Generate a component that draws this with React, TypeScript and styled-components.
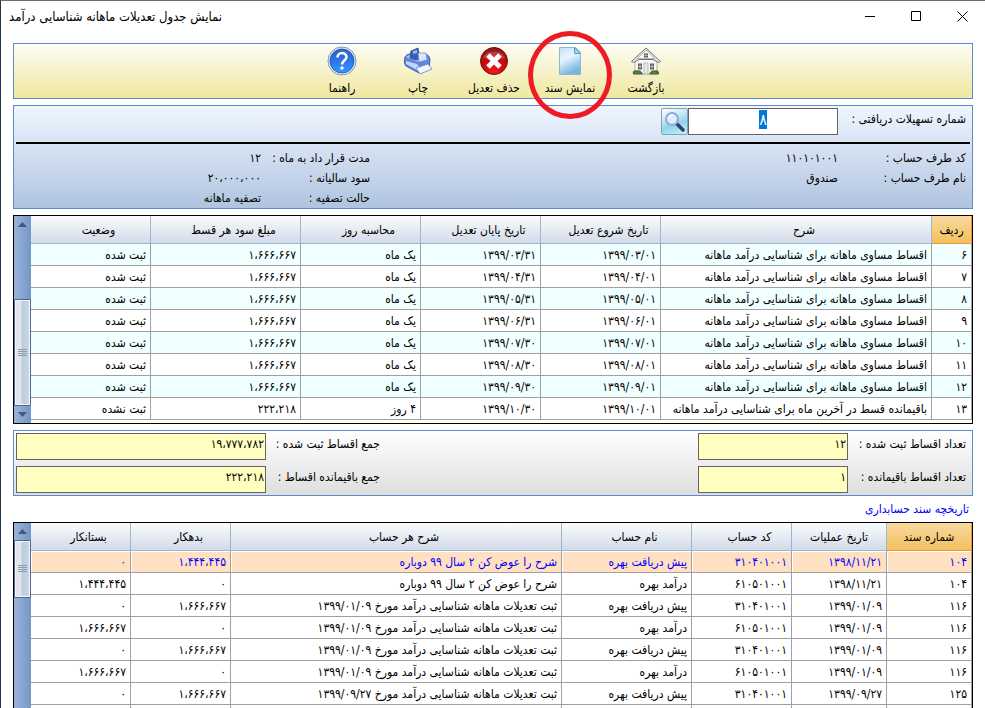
import React from 'react';
import styled, { createGlobalStyle, css } from 'styled-components';

const GlobalStyle = createGlobalStyle`
  *, *::before, *::after { box-sizing: border-box; }
  body { margin: 0; background: #fff; }
  body, button, input { font-family: "DejaVu Sans Condensed", "DejaVu Sans", sans-serif; font-size: 12px; color: #000; }
`;

const Window = styled.div`
  height: 100vh;
  overflow: hidden;
  display: flex;
  flex-direction: column;
  border-top: 1px solid #6e6e6e;
  border-left: 1px solid #22384a;
  background: #fff;
`;

const TitleBar = styled.header`
  flex: none;
  height: 30px;
  display: flex;
  justify-content: space-between;
  align-items: center;
  padding-left: 8px;
`;

const Title = styled.h1`
  margin: 0;
  font-size: 13px;
  font-weight: 400;
`;

const WindowButtons = styled.div`
  display: flex;
`;

const WindowButton = styled.button`
  width: 46px;
  height: 30px;
  padding: 0;
  border: 0;
  background: none;
  display: grid;
  place-items: center;
`;

const Content = styled.main`
  direction: rtl;
  flex: none;
  display: flex;
  flex-direction: column;
  padding: 12px 12px 0;
`;

const Panel = styled.section`
  border: 1px solid #5b8bcd;
`;

const Toolbar = styled(Panel)`
  position: relative;
  z-index: 1;
  height: 56px;
  display: flex;
  justify-content: center;
  padding-left: 2px;
  background: linear-gradient(#fefdf5, #efe7a0);
  margin-bottom: 6px;
`;

const ToolButton = styled.button`
  position: relative;
  width: 76px;
  padding: 2px 0 0;
  border: 0;
  background: none;
  display: flex;
  flex-direction: column;
  align-items: center;
  gap: 2px;
  line-height: 16px;
`;

const Highlight = styled.span`
  position: absolute;
  top: -13px;
  left: 50%;
  width: 84px;
  height: 88px;
  margin-left: -42px;
  border: 5px solid #ed1c24;
  border-radius: 50%;
  pointer-events: none;
`;

const InfoPanel = styled(Panel)`
  padding: 2px 2px 0;
  background: linear-gradient(#eff6ff, #b0c4df);
  margin-bottom: 6px;
`;

const SearchRow = styled.div`
  display: flex;
  align-items: flex-start;
  height: 36px;
  padding-right: 4px;
  border-bottom: 2px solid #000;
`;

const SearchLabel = styled.label`
  width: 128px;
  line-height: 22px;
`;

const SearchInput = styled.input`
  width: 150px;
  height: 27px;
  padding: 0 0 4px;
  font-size: 16px;
  border: 1px solid #646464;
  border-radius: 0;
  background: #fff;
  text-align: center;
  outline: 0;
  &::selection { background: #0078d7; color: #fff; }
`;

const SearchButton = styled.button`
  width: 27px;
  height: 27px;
  padding: 0;
  border: 1px solid #7fa3b8;
  border-radius: 2px;
  background: linear-gradient(160deg, #ffffff 0%, #c6e9f4 35%, #8fd6ea 60%, #c8f0f6 100%);
  display: grid;
  place-items: center;
`;

const Details = styled.dl`
  margin: 0;
  padding: 4px 4px 0 0;
  display: grid;
  grid-template-columns: 128px 1fr 109px 245px;
  grid-auto-rows: 20px;
  line-height: 20px;
`;

const Term = styled.dt<{ $column: number }>`
  grid-column: ${(p) => p.$column};
`;

const Value = styled.dd`
  margin: 0;
`;

const GridFrame = styled.section`
  display: grid;
  grid-template-columns: 1fr 17px;
  border: 1px solid #000;
  background: #fffff0;
`;

const Table = styled.table`
  width: 100%;
  align-self: start;
  margin-bottom: 3px;
  table-layout: fixed;
  border-collapse: separate;
  border-spacing: 0;
`;

const Col = styled.col<{ $width?: number }>`
  ${(p) => p.$width && `width: ${p.$width}px;`}
`;

const HeadCell = styled.th<{ $sorted?: boolean; $shifted?: boolean }>`
  height: 28px;
  padding: 0 0 0 ${(p) => (p.$shifted ? 16 : 0)}px;
  font-weight: 400;
  white-space: nowrap;
  border-left: 1px solid #9eb6ce;
  border-bottom: 1px solid #9eb6ce;
  background: linear-gradient(#fafcfd, #d3dbe9);
  &:last-child { border-left: 0; }
  ${(p) => p.$sorted && css`
    border-right: 1px solid #f29536;
    border-bottom-color: #f29536;
    background: linear-gradient(#f9d99f, #f1c15f);
  `}
`;

const Cell = styled.td`
  height: 22px;
  padding: 1px 4px 0 0;
  line-height: 20px;
  text-align: right;
  white-space: nowrap;
  border-left: 1px solid #a0a0a0;
  border-bottom: 1px solid #a0a0a0;
  &:first-child { border-right: 1px solid #a0a0a0; }
  &:last-child { border-left: 0; }
`;

const Row = styled.tr<{ $tone: 'plain' | 'tinted' | 'selected' }>`
  background: ${(p) => ({ plain: '#fff', tinted: '#f0ffff', selected: '#ffe0c0' })[p.$tone]};
  ${(p) => p.$tone === 'selected' && css`
    color: #0000ff;
    ${Cell} { box-shadow: inset 1px 1px 0 #fff; }
  `}
`;

const ScrollBar = styled.div`
  display: flex;
  flex-direction: column;
  background: linear-gradient(90deg, #97b4dc, #7596c6);
`;

const ScrollArrow = styled.button`
  flex: none;
  height: 17px;
  padding: 0;
  border: 0;
  background: none;
  display: grid;
  place-items: center;
`;

const Track = styled.div<{ $atEnd?: boolean }>`
  flex: 1;
  display: flex;
  flex-direction: column;
  justify-content: ${(p) => (p.$atEnd ? 'flex-end' : 'flex-start')};
`;

const Thumb = styled.div<{ $size: number }>`
  height: ${(p) => p.$size}px;
  border: 1px solid #56658f;
  border-radius: 1px;
  box-shadow: inset 0 0 0 1px #f3f6fb;
  background: linear-gradient(90deg, #e2e5ec 0 6px, #bccbdd 7px, #cbd7e6 100%);
  display: grid;
  place-items: center;
`;

const Summary = styled(Panel)`
  margin-top: 6px;
  padding: 2px 6px 2px 2px;
  display: grid;
  grid-template-columns: 118px 150px 1fr 114px 250px;
  row-gap: 6px;
  background: linear-gradient(#fff, #dedede);
`;

const SummaryLabel = styled.label<{ $column: number }>`
  grid-column: ${(p) => p.$column};
  line-height: 22px;
`;

const SummaryField = styled.input`
  min-width: 0;
  width: 100%;
  height: 27px;
  padding: 0 1px 6px;
  border: 1px solid #646464;
  border-radius: 0;
  background: #ffffc0;
  outline: 0;
`;

const HistoryTitle = styled.h2`
  margin: 0;
  padding: 2px 4px 0 0;
  height: 26px;
  line-height: 22px;
  font-size: 12px;
  font-weight: 400;
  color: #0000ff;
`;

const HomeIcon = () => (
  <svg width="32" height="32" viewBox="0 0 32 32">
    <path d="M5 14 16 4l11 10v14H5z" fill="#f7f7f5" stroke="#a5a5a5" strokeWidth=".8" />
    <path d="M16 2 1.500 15.500l2 1L9 13.500h14l5.500 3 2-1z" fill="#e4e4e4" stroke="#666" strokeWidth=".9" />
    <path d="M16 4 7.500 12.500h17z" fill="#fbfbf9" stroke="#999" strokeWidth=".7" />
    <path d="M14 7.500h4v4h-4z" fill="#555" />
    <path d="M16 7.500v4M14 9.500h4" stroke="#ddd" strokeWidth=".6" />
    <path d="M8 17.500h4v6H8zM20 17.500h4v6h-4z" fill="#555" />
    <path d="M10 17.500v6M8 20.500h4M22 17.500v6M20 20.500h4" stroke="#ddd" strokeWidth=".7" />
    <path d="M14 17h4v11h-4z" fill="#e8e8e6" stroke="#aaa" strokeWidth=".7" />
    <path d="M3 28.500c-1-3 1-5 4-4 3-1 5 1 6 4zM19 28.500c1-3 3-5 6-4 2-1 5 1 4 4z" fill="#4f7038" />
    <path d="M5 26.500h3M23 26.500h3" stroke="#8a6a4c" />
  </svg>
);

const DocumentIcon = () => (
  <svg width="32" height="32" viewBox="0 0 32 32">
    <defs>
      <linearGradient id="sheet" x1="0" y1="0" x2=".4" y2="1">
        <stop offset="0" stopColor="#c3e0f5" />
        <stop offset=".45" stopColor="#e6f6ff" />
        <stop offset="1" stopColor="#79b5df" />
      </linearGradient>
    </defs>
    <path d="M5.500 1.500h16l5 5v22h-21z" fill="url(#sheet)" stroke="#8fb9d2" />
    <path d="M20.500 1.500v6h6z" fill="#a5d3ec" stroke="#5f9dc4" strokeLinejoin="round" />
  </svg>
);

const DeleteIcon = () => (
  <svg width="32" height="32" viewBox="0 0 32 32">
    <defs>
      <radialGradient id="red" cx=".5" cy=".9" r=".9">
        <stop offset="0" stopColor="#f01818" />
        <stop offset=".6" stopColor="#c40a0a" />
        <stop offset="1" stopColor="#8c1a1a" />
      </radialGradient>
    </defs>
    <circle cx="16" cy="15" r="13.500" fill="url(#red)" stroke="#6e1414" />
    <path d="M5 11.500a12 10 0 0 1 22 0c-7 4-15 4-22 0z" fill="#fff" opacity=".18" />
    <path d="m10 9 12 12m0-12-12 12" stroke="#fff" strokeWidth="5" />
  </svg>
);

const PrinterIcon = () => (
  <svg width="32" height="32" viewBox="0 0 32 32">
    <path d="M3 11c1-2 3-3 5-3l14 0c4 0 6 3 6 6l-1 8-10 5L4 20c-2-2-2-6-1-9z" fill="#5f86dc" stroke="#3c5fb8" />
    <path d="M4 11c2-2 4-2 6-2h12l4 4-10 3z" fill="#a9c4f5" />
    <path d="m8 12 1-7 7-3 2 11-4 1z" fill="#3a5fb4" stroke="#28479a" strokeWidth=".8" />
    <path d="m11 5 4-1v3l-4 1z" fill="#9db9ec" />
    <path d="m16 7 8 0 1 7-8 2z" fill="#dbe8fc" stroke="#6c8acb" strokeWidth=".8" />
    <path d="m4 15 11 3 2 3-2 3L4 18z" fill="#c2d6fa" />
    <path d="m14 22 12-4 4 5-12 5z" fill="#f2f7ff" stroke="#7490c5" strokeWidth=".9" />
  </svg>
);

const HelpIcon = () => (
  <svg width="32" height="32" viewBox="0 0 32 32">
    <defs>
      <linearGradient id="blue" x1="0" y1="0" x2="0" y2="1">
        <stop offset="0" stopColor="#2b64c9" />
        <stop offset=".5" stopColor="#2e74e8" />
        <stop offset="1" stopColor="#2f9bff" />
      </linearGradient>
    </defs>
    <circle cx="16" cy="15" r="14" fill="#dce8f7" stroke="#8298b5" />
    <circle cx="16" cy="15" r="12" fill="url(#blue)" stroke="#1d4fb0" strokeWidth=".8" />
    <path d="M11.500 11.500c0-6 9-6 9-.5 0 3.500-4.500 3.500-4.500 7.500" fill="none" stroke="#fff" strokeWidth="2.600" />
    <circle cx="16" cy="22" r="1.700" fill="#fff" />
  </svg>
);

const MagnifierIcon = () => (
  <svg width="21" height="21" viewBox="0 0 21 21">
    <path d="m12 12 7 7" stroke="#3b3a78" strokeWidth="3.500" strokeLinecap="round" />
    <circle cx="8" cy="8" r="6" fill="#dceeff" stroke="#8fa8d4" strokeWidth="2" />
    <path d="M5 7a4 4 0 0 1 4-3" fill="none" stroke="#fff" strokeWidth="1.500" />
  </svg>
);

const Arrow = ({ down }: { down?: boolean }) => (
  <svg width="9" height="5" viewBox="0 0 9 5">
    <path d={down ? 'M0 0h9L4.500 5z' : 'M0 5h9L4.500 0z'} fill="#44577f" />
  </svg>
);

const Grip = () => (
  <svg width="9" height="8" viewBox="0 0 9 8">
    <path d="M0 .5h9M0 2.500h9M0 4.500h9M0 6.500h9" stroke="#8d9bb0" />
  </svg>
);

type Column = { title: string; width?: number; sorted?: boolean; shifted?: boolean };

const installmentColumns: Column[] = [
  { title: 'ردیف', width: 41, sorted: true },
  { title: 'شرح', shifted: true },
  { title: 'تاریخ شروع تعدیل', width: 120, shifted: true },
  { title: 'تاریخ پایان تعدیل', width: 120, shifted: true },
  { title: 'محاسبه روز', width: 120, shifted: true },
  { title: 'مبلغ سود هر قسط', width: 150, shifted: true },
  { title: 'وضعیت', width: 119, shifted: true },
];

const regular = 'اقساط مساوی ماهانه برای شناسایی درآمد ماهانه';
const installments = [
  ['۶', regular, '۱۳۹۹/۰۳/۰۱', '۱۳۹۹/۰۳/۳۱', 'یک ماه', '۱،۶۶۶،۶۶۷', 'ثبت شده'],
  ['۷', regular, '۱۳۹۹/۰۴/۰۱', '۱۳۹۹/۰۴/۳۱', 'یک ماه', '۱،۶۶۶،۶۶۷', 'ثبت شده'],
  ['۸', regular, '۱۳۹۹/۰۵/۰۱', '۱۳۹۹/۰۵/۳۱', 'یک ماه', '۱،۶۶۶،۶۶۷', 'ثبت شده'],
  ['۹', regular, '۱۳۹۹/۰۶/۰۱', '۱۳۹۹/۰۶/۳۱', 'یک ماه', '۱،۶۶۶،۶۶۷', 'ثبت شده'],
  ['۱۰', regular, '۱۳۹۹/۰۷/۰۱', '۱۳۹۹/۰۷/۳۰', 'یک ماه', '۱،۶۶۶،۶۶۷', 'ثبت شده'],
  ['۱۱', regular, '۱۳۹۹/۰۸/۰۱', '۱۳۹۹/۰۸/۳۰', 'یک ماه', '۱،۶۶۶،۶۶۷', 'ثبت شده'],
  ['۱۲', regular, '۱۳۹۹/۰۹/۰۱', '۱۳۹۹/۰۹/۳۰', 'یک ماه', '۱،۶۶۶،۶۶۷', 'ثبت شده'],
  ['۱۳', 'باقیمانده قسط در آخرین ماه برای شناسایی درآمد ماهانه', '۱۳۹۹/۱۰/۰۱', '۱۳۹۹/۱۰/۳۰', '۴ روز', '۲۲۲،۲۱۸', 'ثبت نشده'],
];

const voucherColumns: Column[] = [
  { title: 'شماره سند', width: 86, sorted: true },
  { title: 'تاریخ عملیات', width: 95 },
  { title: 'کد حساب', width: 100, shifted: true },
  { title: 'نام حساب', width: 130, shifted: true },
  { title: 'شرح هر حساب', shifted: true },
  { title: 'بدهکار', width: 100, shifted: true },
  { title: 'بستانکار', width: 99, shifted: true },
];

const changed = 'شرح را عوض کن ۲ سال ۹۹ دوباره';
const posted = 'ثبت تعدیلات ماهانه شناسایی درآمد مورخ ۱۳۹۹/۰۱/۰۹';
const vouchers = [
  ['۱۰۴', '۱۳۹۸/۱۱/۲۱', '۳۱۰۴۰۱۰۰۱', 'پیش دریافت بهره', changed, '۱،۴۴۴،۴۴۵', '۰'],
  ['۱۰۴', '۱۳۹۸/۱۱/۲۱', '۶۱۰۵۰۱۰۰۱', 'درآمد بهره', changed, '۰', '۱،۴۴۴،۴۴۵'],
  ['۱۱۶', '۱۳۹۹/۰۱/۰۹', '۳۱۰۴۰۱۰۰۱', 'پیش دریافت بهره', posted, '۱،۶۶۶،۶۶۷', '۰'],
  ['۱۱۶', '۱۳۹۹/۰۱/۰۹', '۶۱۰۵۰۱۰۰۱', 'درآمد بهره', posted, '۰', '۱،۶۶۶،۶۶۷'],
  ['۱۱۶', '۱۳۹۹/۰۱/۰۹', '۳۱۰۴۰۱۰۰۱', 'پیش دریافت بهره', posted, '۱،۶۶۶،۶۶۷', '۰'],
  ['۱۱۶', '۱۳۹۹/۰۱/۰۹', '۶۱۰۵۰۱۰۰۱', 'درآمد بهره', posted, '۰', '۱،۶۶۶،۶۶۷'],
  ['۱۲۵', '۱۳۹۹/۰۹/۲۷', '۳۱۰۴۰۱۰۰۱', 'پیش دریافت بهره', 'ثبت تعدیلات ماهانه شناسایی درآمد مورخ ۱۳۹۹/۰۹/۲۷', '۱،۶۶۶،۶۶۷', '۰'],
  ['', '', '', '', '', '', ''],
];

type DataGridProps = {
  columns: Column[];
  rows: string[][];
  tone: (index: number) => 'plain' | 'tinted' | 'selected';
  thumb: number;
  atEnd?: boolean;
};

const DataGrid = ({ columns, rows, tone, thumb, atEnd }: DataGridProps) => (
  <GridFrame>
    <Table>
      <colgroup>
        {columns.map((c) => <Col key={c.title} $width={c.width} />)}
      </colgroup>
      <thead>
        <tr>
          {columns.map((c) => (
            <HeadCell key={c.title} scope="col" $sorted={c.sorted} $shifted={c.shifted}>{c.title}</HeadCell>
          ))}
        </tr>
      </thead>
      <tbody>
        {rows.map((row, i) => (
          <Row key={i} $tone={tone(i)}>
            {row.map((text, j) => <Cell key={j}>{text}</Cell>)}
          </Row>
        ))}
      </tbody>
    </Table>
    <ScrollBar>
      <ScrollArrow type="button" aria-label="بالا"><Arrow /></ScrollArrow>
      <Track $atEnd={atEnd}><Thumb $size={thumb}><Grip /></Thumb></Track>
      <ScrollArrow type="button" aria-label="پایین"><Arrow down /></ScrollArrow>
    </ScrollBar>
  </GridFrame>
);

const tools = [
  { label: 'بازگشت', icon: <HomeIcon /> },
  { label: 'نمایش سند', icon: <DocumentIcon />, marked: true },
  { label: 'حذف تعدیل', icon: <DeleteIcon /> },
  { label: 'چاپ', icon: <PrinterIcon /> },
  { label: 'راهنما', icon: <HelpIcon /> },
];

export default function App() {
  const loanInput = React.useRef<HTMLInputElement>(null);

  React.useEffect(() => {
    loanInput.current?.focus();
    loanInput.current?.select();
  }, []);

  return (
    <>
      <GlobalStyle />
      <Window lang="fa">
        <TitleBar>
          <Title dir="rtl">نمایش جدول تعدیلات ماهانه شناسایی درآمد</Title>
          <WindowButtons>
            <WindowButton type="button" aria-label="کوچک کردن">
              <svg width="11" height="11" viewBox="0 0 11 11"><path d="M0 5.500h10" stroke="#000" /></svg>
            </WindowButton>
            <WindowButton type="button" aria-label="بزرگ کردن">
              <svg width="11" height="11" viewBox="0 0 11 11"><path d="M.5.500h9v9h-9z" fill="none" stroke="#000" /></svg>
            </WindowButton>
            <WindowButton type="button" aria-label="بستن">
              <svg width="11" height="11" viewBox="0 0 11 11"><path d="m.5.500 10 10m0-10-10 10" stroke="#000" /></svg>
            </WindowButton>
          </WindowButtons>
        </TitleBar>
        <Content>
          <Toolbar>
            {tools.map((tool) => (
              <ToolButton key={tool.label} type="button">
                {tool.icon}
                {tool.label}
                {tool.marked && <Highlight />}
              </ToolButton>
            ))}
          </Toolbar>
          <InfoPanel>
            <SearchRow>
              <SearchLabel htmlFor="loan">شماره تسهیلات دریافتی :</SearchLabel>
              <SearchInput id="loan" ref={loanInput} defaultValue="۸" />
              <SearchButton type="button" aria-label="جستجو"><MagnifierIcon /></SearchButton>
            </SearchRow>
            <Details>
              <Term $column={1}>کد طرف حساب :</Term>
              <Value>۱۱۰۱۰۱۰۰۱</Value>
              <Term $column={3}>مدت قرار داد به ماه :</Term>
              <Value>۱۲</Value>
              <Term $column={1}>نام طرف حساب :</Term>
              <Value>صندوق</Value>
              <Term $column={3}>سود سالیانه :</Term>
              <Value>۲۰،۰۰۰،۰۰۰</Value>
              <Term $column={3}>حالت تصفیه :</Term>
              <Value>تصفیه ماهانه</Value>
            </Details>
          </InfoPanel>
          <DataGrid
            columns={installmentColumns}
            rows={installments}
            tone={(i) => (i % 2 === 0 ? 'tinted' : 'plain')}
            thumb={107}
            atEnd
          />
          <Summary>
            <SummaryLabel $column={1} htmlFor="postedCount">تعداد اقساط ثبت شده :</SummaryLabel>
            <SummaryField id="postedCount" readOnly value="۱۲" />
            <SummaryLabel $column={4} htmlFor="postedSum">جمع اقساط ثبت شده :</SummaryLabel>
            <SummaryField id="postedSum" readOnly value="۱۹،۷۷۷،۷۸۲" />
            <SummaryLabel $column={1} htmlFor="restCount">تعداد اقساط باقیمانده :</SummaryLabel>
            <SummaryField id="restCount" readOnly value="۱" />
            <SummaryLabel $column={4} htmlFor="restSum">جمع باقیمانده اقساط :</SummaryLabel>
            <SummaryField id="restSum" readOnly value="۲۲۲،۲۱۸" />
          </Summary>
          <HistoryTitle>تاریخچه سند حسابداری</HistoryTitle>
          <DataGrid
            columns={voucherColumns}
            rows={vouchers}
            tone={(i) => (i === 0 ? 'selected' : 'plain')}
            thumb={58}
          />
        </Content>
      </Window>
    </>
  );
}
